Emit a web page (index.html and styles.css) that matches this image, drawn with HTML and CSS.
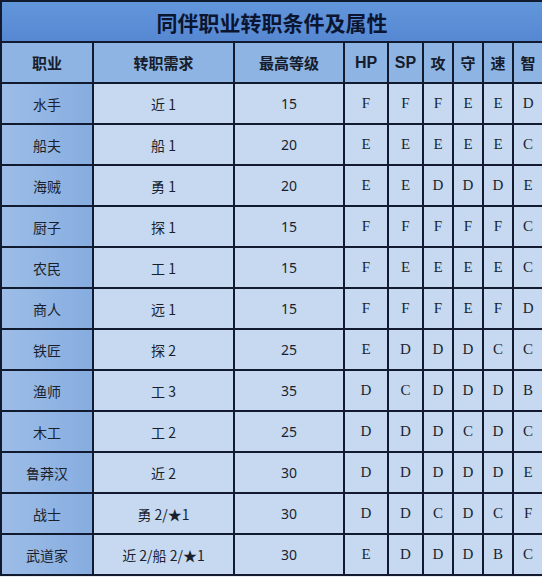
FILE: index.html
```html
<!DOCTYPE html>
<html lang="zh">
<head>
<meta charset="utf-8">
<link rel="stylesheet" href="styles.css">
</head>
<body>
<table class="grid">
  <colgroup>
    <col class="c-job"><col class="c-req"><col class="c-lv"><col class="c-hp"><col class="c-sp"><col class="c-s"><col class="c-s"><col class="c-s"><col class="c-s">
  </colgroup>
  <tr class="title-row"><td colspan="9" class="title">同伴职业转职条件及属性</td></tr>
  <tr class="head-row">
    <th>职业</th><th>转职需求</th><th>最高等级</th><th class="latin">HP</th><th class="latin">SP</th><th>攻</th><th>守</th><th>速</th><th>智</th>
  </tr>
  <tr><th class="job">水手</th><td class="req">近 1</td><td class="num">15</td><td>F</td><td>F</td><td>F</td><td>E</td><td>E</td><td>D</td></tr>
  <tr><th class="job">船夫</th><td class="req">船 1</td><td class="num">20</td><td>E</td><td>E</td><td>E</td><td>E</td><td>E</td><td>C</td></tr>
  <tr><th class="job">海贼</th><td class="req">勇 1</td><td class="num">20</td><td>E</td><td>E</td><td>D</td><td>D</td><td>D</td><td>E</td></tr>
  <tr><th class="job">厨子</th><td class="req">探 1</td><td class="num">15</td><td>F</td><td>F</td><td>F</td><td>F</td><td>F</td><td>C</td></tr>
  <tr><th class="job">农民</th><td class="req">工 1</td><td class="num">15</td><td>F</td><td>E</td><td>E</td><td>E</td><td>E</td><td>C</td></tr>
  <tr><th class="job">商人</th><td class="req">远 1</td><td class="num">15</td><td>F</td><td>F</td><td>F</td><td>E</td><td>F</td><td>D</td></tr>
  <tr><th class="job">铁匠</th><td class="req">探 2</td><td class="num">25</td><td>E</td><td>D</td><td>D</td><td>D</td><td>C</td><td>C</td></tr>
  <tr><th class="job">渔师</th><td class="req">工 3</td><td class="num">35</td><td>D</td><td>C</td><td>D</td><td>D</td><td>D</td><td>B</td></tr>
  <tr><th class="job">木工</th><td class="req">工 2</td><td class="num">25</td><td>D</td><td>D</td><td>D</td><td>C</td><td>D</td><td>C</td></tr>
  <tr><th class="job">鲁莽汉</th><td class="req">近 2</td><td class="num">30</td><td>D</td><td>D</td><td>D</td><td>D</td><td>D</td><td>E</td></tr>
  <tr><th class="job">战士</th><td class="req">勇 2/★1</td><td class="num">30</td><td>D</td><td>D</td><td>C</td><td>D</td><td>C</td><td>F</td></tr>
  <tr><th class="job">武道家</th><td class="req">近 2/船 2/★1</td><td class="num">30</td><td>E</td><td>D</td><td>D</td><td>D</td><td>B</td><td>C</td></tr>
</table>
</body>
</html>
```

FILE: styles.css
```css
html, body {
  margin: 0;
  padding: 0;
  background: #e9eef6;
}

.grid {
  border-collapse: collapse;
  table-layout: fixed;
  width: 542px;
  font-family: "Noto Sans CJK SC", "Noto Sans", sans-serif;
  color: #1a1f2e;
}

.c-job { width: 92px; }
.c-req { width: 141px; }
.c-lv { width: 110px; }
.c-hp { width: 44px; }
.c-sp { width: 35px; }
.c-s { width: 30px; }

.grid td, .grid th {
  border: 2px solid #121a30;
  height: 39px;
  padding: 0;
  text-align: center;
  vertical-align: middle;
  background: #c6d9f1;
  font-family: "Liberation Serif", "Noto Sans CJK SC", serif;
  font-size: 15px;
  font-weight: normal;
}

.grid .title {
  background: linear-gradient(#6296db, #5688d2);
  font-family: "Noto Sans CJK SC", sans-serif;
  font-size: 21px;
  font-weight: bold;
  color: #0b1530;
}

.head-row th {
  background: #8eb4e3;
  font-family: "Noto Sans CJK SC", sans-serif;
  font-size: 15px;
  font-weight: bold;
  color: #161c2c;
}

.head-row th.latin {
  font-family: "Liberation Sans", "Noto Sans", sans-serif;
  font-size: 16px;
  font-weight: bold;
}

.grid th.job {
  background: linear-gradient(90deg, #9dbde7, #86ade0);
  font-family: "Noto Sans CJK SC", sans-serif;
  font-size: 14px;
  font-weight: normal;
  color: #1a1f2e;
}

.grid td.req {
  font-family: "Noto Sans CJK SC", sans-serif;
  font-size: 14px;
}

.grid td.num {
  font-family: "Noto Sans", "Liberation Sans", sans-serif;
  font-size: 14px;
}
```
